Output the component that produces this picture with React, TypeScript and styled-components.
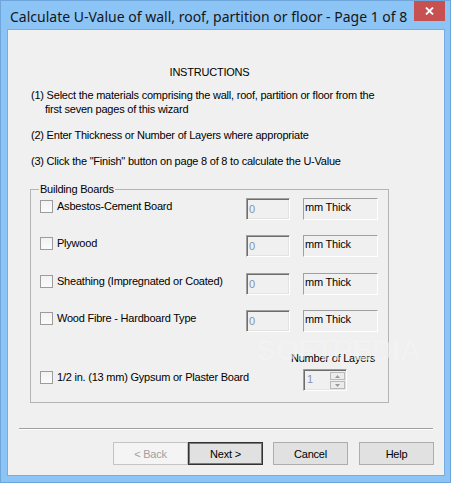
import React from 'react'
import styled, { createGlobalStyle } from 'styled-components'

const GlobalStyle = createGlobalStyle`
  html, body {
    margin: 0;
    padding: 0;
    background: #8cc4f5;
  }
  #root {
    width: 451px;
    height: 483px;
  }
`

const Window = styled.div`
  position: relative;
  width: 451px;
  height: 483px;
  box-sizing: border-box;
  background: #8cc4f5;
  border: 1px solid #6ea6db;
  display: flex;
  flex-direction: column;
  padding: 0 5px 6px 6px;
  font-family: 'Liberation Sans', Arial, sans-serif;
  font-size: 11px;
  letter-spacing: -0.22px;
  color: #000;
  overflow: hidden;
`

const TitleBar = styled.div`
  height: 28px;
  display: flex;
  align-items: flex-start;
  justify-content: space-between;
`

const Title = styled.div`
  font-family: 'Noto Sans', 'Open Sans', sans-serif;
  font-size: 14px;
  letter-spacing: 0;
  line-height: 20px;
  margin: 6px 0 0 3px;
  color: #161616;
  white-space: nowrap;
  min-width: 0;
`

const CloseButton = styled.div`
  width: 31px;
  height: 20px;
  flex: none;
  background: #c75050;
  display: flex;
  align-items: center;
  justify-content: center;
`

const Client = styled.div`
  flex: 1;
  background: #f0f0f0;
  border: 1px solid #78acdf;
  display: flex;
  flex-direction: column;
`

const Content = styled.div`
  margin-left: 22px;
  width: 359px;
  display: flex;
  flex-direction: column;
`

const Heading = styled.div`
  margin-top: 35px;
  line-height: 14px;
  text-align: center;
`

const Step = styled.div<{ $top: number }>`
  margin-top: ${(p) => p.$top}px;
  margin-left: 1px;
  padding-left: 14px;
  text-indent: -14px;
  line-height: 14px;
  width: 336px;
`

const GroupBox = styled.div`
  position: relative;
  margin-top: 21px;
  border: 1px solid #b4b4b4;
  height: 214px;
  box-sizing: border-box;
  padding: 8px 0 0 9px;
  display: flex;
  flex-direction: column;
`

const GroupLabel = styled.div`
  position: absolute;
  top: -8px;
  left: 8px;
  padding: 0 1px;
  line-height: 14px;
  background: #f0f0f0;
`

const Row = styled.div<{ $top?: number }>`
  display: grid;
  grid-template-columns: 193px 44px 75px;
  column-gap: 13px;
  height: 22px;
  margin-top: ${(p) => p.$top ?? 0}px;
`

const LayersRow = styled.div`
  display: grid;
  grid-template-columns: 193px 44px 75px;
  column-gap: 13px;
  margin-top: 19px;
`

const CheckLabel = styled.label`
  display: flex;
  align-items: center;
  height: 14px;
  margin-top: 1px;
  white-space: nowrap;
`

const CheckBox = styled.span`
  width: 13px;
  height: 13px;
  box-sizing: border-box;
  border: 1px solid #9c9c9c;
  background: linear-gradient(#f2f2f2, #fbfbfb);
  margin-right: 4px;
  flex: none;
`

const TextBox = styled.div`
  box-sizing: border-box;
  height: 22px;
  border-top: 1px solid #a0a0a0;
  border-left: 1px solid #a0a0a0;
  border-right: 1px solid #fff;
  border-bottom: 1px solid #fff;
  box-shadow: inset 1px 1px 0 #6d6d6d, inset -1px -1px 0 #e3e3e3;
  padding: 3px 0 0 2px;
  line-height: 14px;
  color: #8393ae;
`

const UnitBox = styled.div`
  box-sizing: border-box;
  height: 22px;
  border-top: 1px solid #a0a0a0;
  border-left: 1px solid #a0a0a0;
  border-right: 1px solid #fff;
  border-bottom: 1px solid #fff;
  padding: 1px 0 0 1px;
  line-height: 14px;
`

const LayersLabel = styled.div`
  grid-column: 3;
  margin-left: -12px;
  line-height: 14px;
  white-space: nowrap;
`

const SpinBox = styled(TextBox)`
  grid-column: 3;
  width: 44px;
  display: flex;
  justify-content: space-between;
  padding: 2px 1px 1px 3px;
`

const SpinButtons = styled.div`
  width: 15px;
  display: flex;
  flex-direction: column;
  gap: 1px;
`

const SpinButton = styled.div`
  flex: 1;
  box-sizing: border-box;
  border: 1px solid #b9b9b9;
  background: #ececec;
  display: flex;
  align-items: center;
  justify-content: center;
`

const Separator = styled.div`
  margin: 25px 11px 0 11px;
  border-top: 1px solid #a0a0a0;
  border-bottom: 1px solid #fff;
`

const ButtonBar = styled.div`
  display: flex;
  justify-content: flex-end;
  margin: 12px 10px 0 0;
`

const Button = styled.div<{ $variant?: 'disabled' | 'default'; $gap?: number }>`
  width: 75px;
  height: 23px;
  box-sizing: border-box;
  margin-left: ${(p) => p.$gap ?? 0}px;
  display: flex;
  align-items: center;
  justify-content: center;
  background: ${(p) => (p.$variant === 'disabled' ? '#f4f4f4' : '#e1e1e1')};
  border: 1px solid
    ${(p) => (p.$variant === 'disabled' ? '#c4c4c4' : p.$variant === 'default' ? '#333' : '#adadad')};
  box-shadow: ${(p) => (p.$variant === 'default' ? 'inset 0 0 0 1px #7a7a7a' : 'none')};
  color: ${(p) => (p.$variant === 'disabled' ? '#a0a0a0' : '#000')};
`

const Watermark = styled.div`
  position: absolute;
  left: 255px;
  top: 332px;
  font-family: 'Liberation Sans', Arial, sans-serif;
  font-weight: bold;
  font-size: 30px;
  letter-spacing: -0.8px;
  color: rgba(255, 255, 255, 0.55);
  text-shadow: 0 0 1px rgba(0, 0, 0, 0.05);
  pointer-events: none;
  sup {
    font-size: 10px;
    vertical-align: 14px;
    margin-left: 2px;
  }
`

const Arrow = ({ up }: { up?: boolean }) => (
  <svg width="5" height="3" viewBox="0 0 5 3">
    <path d={up ? 'M0 3 L2.5 0 L5 3 Z' : 'M0 0 L2.5 3 L5 0 Z'} fill="#9a9a9a" />
  </svg>
)

const boards = [
  'Asbestos-Cement Board',
  'Plywood',
  'Sheathing (Impregnated or Coated)',
  'Wood Fibre - Hardboard Type',
]

const App = () => {
  return (
    <Window>
      <GlobalStyle />
      <TitleBar>
        <Title>Calculate U-Value of wall, roof, partition or floor - Page 1 of 8</Title>
        <CloseButton>
          <svg width="9" height="8" viewBox="0 0 9 8">
            <path d="M1 0.5 L8 7.5 M8 0.5 L1 7.5" stroke="#fff" strokeWidth="1.8" />
          </svg>
        </CloseButton>
      </TitleBar>
      <Client>
        <Content>
          <Heading>INSTRUCTIONS</Heading>
          <Step $top={9}>
            (1) Select the materials comprising the wall, roof, partition or floor from the first seven pages of this wizard
          </Step>
          <Step $top={12}>(2) Enter Thickness or Number of Layers where appropriate</Step>
          <Step $top={12}>(3) Click the "Finish" button on page 8 of 8 to calculate the U-Value</Step>
          <GroupBox>
            <GroupLabel>Building Boards</GroupLabel>
            {boards.map((b, i) => (
              <Row key={b} $top={i === 0 ? 0 : i === 2 ? 16 : 15}>
                <CheckLabel>
                  <CheckBox />
                  {b}
                </CheckLabel>
                <TextBox>0</TextBox>
                <UnitBox>mm Thick</UnitBox>
              </Row>
            ))}
            <LayersRow>
              <LayersLabel>Number of Layers</LayersLabel>
            </LayersRow>
            <Row $top={4}>
              <CheckLabel>
                <CheckBox />
                1/2 in. (13 mm) Gypsum or Plaster Board
              </CheckLabel>
              <SpinBox>
                <span>1</span>
                <SpinButtons>
                  <SpinButton>
                    <Arrow up />
                  </SpinButton>
                  <SpinButton>
                    <Arrow />
                  </SpinButton>
                </SpinButtons>
              </SpinBox>
            </Row>
          </GroupBox>
        </Content>
        <Separator />
        <ButtonBar>
          <Button $variant="disabled">&lt; Back</Button>
          <Button $variant="default">Next &gt;</Button>
          <Button $gap={10}>Cancel</Button>
          <Button $gap={11}>Help</Button>
        </ButtonBar>
      </Client>
      <Watermark>
        SOFTPEDIA<sup>®</sup>
      </Watermark>
    </Window>
  )
}

export default App
